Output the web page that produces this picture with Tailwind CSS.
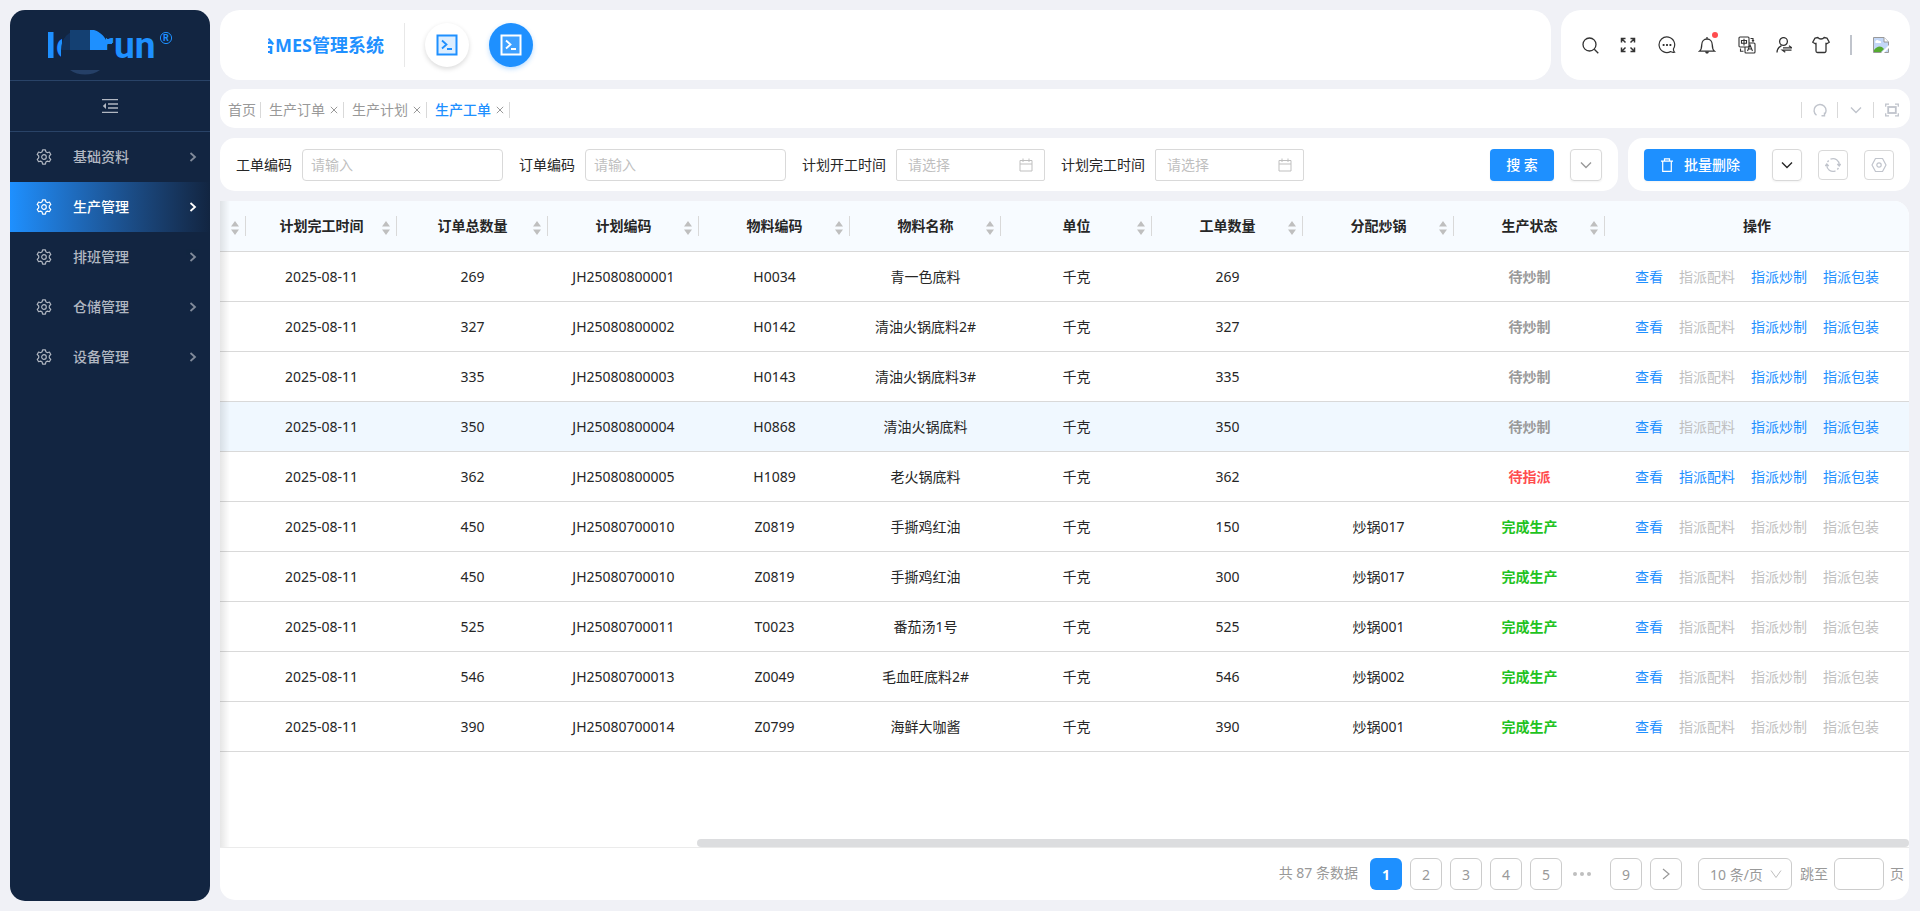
<!DOCTYPE html>
<html lang="zh-CN">
<head>
<meta charset="utf-8">
<title>MES管理系统 - 生产工单</title>
<script src="https://cdn.jsdelivr.net/npm/@tailwindcss/browser@4"></script>
</head>
<body class="bg-[#f0f1f6] font-['Noto_Sans','Noto_Sans_CJK_SC',sans-serif] text-sm leading-5 text-[#262626]">
<svg class="hidden" aria-hidden="true">
  <symbol id="gear" viewBox="0 0 16 16" fill="none" stroke="currentColor" stroke-width="1.2" stroke-linejoin="round">
    <path d="M6.6.8h2.8l.5 2 1.5.9 2-.7 1.4 2.5-1.5 1.4v1.9l1.5 1.5-1.4 2.4-2-.6-1.5.9-.5 2.1H6.600l-.5-2.100-1.500-.9-2 .6-1.400-2.400 1.500-1.500V6.900L1.200 5.500 2.600 3l2 .7 1.500-.9z"/><circle cx="8" cy="8" r="2.300"/>
  </symbol>
  <symbol id="right" viewBox="0 0 10 10" fill="none" stroke="currentColor" stroke-width="1.800"><path d="M2.500 1 7 5 2.500 9"/></symbol>
  <symbol id="down" viewBox="0 0 12 12" fill="none" stroke="currentColor" stroke-width="1.400"><path d="M1 3.500 6 8.500 11 3.500"/></symbol>
  <symbol id="close" viewBox="0 0 8 8" fill="none" stroke="currentColor" stroke-width="1"><path d="M.8.8 7.200 7.200M7.200.8.8 7.200"/></symbol>
  <symbol id="console" viewBox="0 0 22 22" fill="none" stroke="currentColor" stroke-width="2">
    <rect x="1.500" y="1.500" width="19" height="19" fill="currentColor" fill-opacity=".15"/><path d="m6 6.500 4.500 4L6 14.500M11 15h5" stroke-width="1.800"/>
  </symbol>
  <symbol id="sort" viewBox="0 0 8 14" fill="#bfbfbf"><path d="M4 0 8 5.500H0zM0 8.500h8L4 14z"/></symbol>
  <symbol id="calendar" viewBox="0 0 14 14" fill="none" stroke="currentColor"><path d="M1 2.500h12v10.500H1zM1 6h12M4 .5v3.500M10 .5v3.500"/></symbol>
</svg>

<div class="flex min-h-screen gap-2.5 p-2.5">
  <aside class="flex w-[200px] shrink-0 flex-col overflow-hidden rounded-[15px] bg-[#122541] text-[#b1b7c1]">
    <div class="h-[71px] border-b border-[#294367]">
      <svg class="block" width="200" height="70" viewBox="0 0 200 70" role="img" aria-label="logo">
        <g fill="#1e90ff" font-family="Roboto, sans-serif" font-weight="700" font-size="37">
          <text x="46" y="48">o</text><text x="90" y="48">r</text><text x="104" y="48">un</text>
          <rect x="38" y="22" width="5.500" height="26"/>
        </g>
        <path d="M52 20h46v7H96v21h4v12H52z" fill="#122541"/>
        <path d="M51 40c0-12 8-20 19-20h10v20z" fill="#12305a"/>
        <path d="M60 20h20v20H60z" fill="#144072"/>
        <path d="M80 20h4c6 2 10 6 12 10v-1h6v5h-5v6H80z" fill="#1e90ff"/>
        <path d="M51 40h53v20H51z" fill="#122541"/>
        <path d="M60 60h30c-8 6-22 6-30 0z" fill="#254067"/>
        <circle cx="156" cy="28" r="5.600" fill="none" stroke="#1e90ff"/>
        <text x="153" y="31" font-size="9" font-weight="700" font-family="Roboto, sans-serif" fill="#1e90ff">R</text>
      </svg>
    </div>
    <button aria-label="收起菜单" class="flex h-[51px] items-center justify-center border-b border-[#294367]">
      <svg class="size-4" viewBox="0 0 16 16" fill="none" stroke="currentColor" stroke-width="1.300"><path d="M0 1.700h16M6 6h10M6 10h10M0 14.300h16"/><path d="M4 5v6L.8 8z" fill="currentColor" stroke="none"/></svg>
    </button>
    <nav id="menu" class="font-medium"></nav>
  </aside>

  <main class="flex min-w-0 flex-1 flex-col pb-px">
    <header class="flex h-[70px] gap-2.5">
      <div class="flex flex-1 items-center rounded-[20px] bg-white pl-12">
        <h1 class="flex text-lg leading-7 font-bold text-[#1e90ff]"><span class="flex w-[7px] justify-end overflow-hidden">台</span>MES管理系统</h1>
        <span class="ml-5 h-11 w-px bg-[#e8e8e8]"></span>
        <button aria-label="控制台" class="ml-5 flex size-11 items-center justify-center rounded-full bg-white text-[#1e90ff] shadow-[0_2px_5px_rgba(0,0,0,0.15)]"><svg class="size-[22px]"><use href="#console"/></svg></button>
        <button aria-label="生产控制台" class="ml-5 flex size-11 items-center justify-center rounded-full bg-[#1e90ff] text-white shadow-[0_2px_5px_rgba(30,144,255,0.3)]"><svg class="size-[22px]"><use href="#console"/></svg></button>
      </div>
      <div class="flex w-[349px] items-center gap-[18px] rounded-[20px] bg-white pl-[19px] text-[#333]">
        <button aria-label="搜索" class="flex w-5 justify-center"><svg class="size-[17px]" viewBox="0 0 17 17" fill="none" stroke="currentColor" stroke-width="1.300"><circle cx="7.500" cy="7.500" r="6.500"/><path d="m12.300 12.300 4 4"/></svg></button>
        <button aria-label="全屏" class="flex w-5 justify-center"><svg class="size-4" viewBox="0 0 16 16" fill="none" stroke="currentColor" stroke-width="1.500"><path d="M1.500 5.500v-4h4M1.500 1.500l4 4M10.500 1.500h4v4M14.500 1.500l-4 4M1.500 10.500v4h4M1.500 14.500l4-4M10.500 14.500h4v-4M14.500 14.500l-4-4"/></svg></button>
        <button aria-label="消息" class="flex w-[22px] justify-center"><svg class="size-[18px]" viewBox="0 0 18 18" fill="none" stroke="currentColor" stroke-width="1.200"><path d="M15.500 12.800A7.800 7.800 0 1 0 12.500 15.600c1 .6 2.500.9 4 .5-.9-.9-1.200-2-1-3.300z"/><path d="M4.700 9h1.800M8.100 9h1.800M11.500 9h1.800" stroke-width="1.800"/></svg></button>
        <button aria-label="通知" class="relative flex w-[22px] justify-center"><svg class="size-[18px]" viewBox="0 0 18 18" fill="none" stroke="currentColor" stroke-width="1.300"><path d="M1.500 15.200h15c-2-1.500-2.200-3.300-2.200-6.200C14.300 5.500 12 3 9 3S3.700 5.500 3.700 9c0 2.900-.2 4.700-2.200 6.200zM9 3V1"/><path d="M6.800 15.500h4.400L10 17.500H8z" fill="currentColor" stroke="none"/></svg><span class="absolute -top-1 right-0 size-1.5 rounded-full bg-[#ff4d4f]"></span></button>
        <button aria-label="语言" class="flex w-[22px] justify-center"><svg class="size-[18px]" viewBox="0 0 18 18" fill="none" stroke="currentColor" stroke-width="1.100"><rect x="1" y="1" width="10" height="10" rx="1"/><path d="M3.500 4.500h5v2.800h-5zM6 2.800v6.600M11 7h5a1 1 0 0 1 1 1v8a1 1 0 0 1-1 1H8a1 1 0 0 1-1-1v-5M9.500 15l2.500-6 2.500 6M10.300 13h3.400M12.500 2.500H15v2.700M2.500 12.500v2.700H5.500M14 4.200l1 1.200 1-1.200"/></svg></button>
        <button aria-label="切换用户" class="flex w-4 justify-center"><svg class="size-4" viewBox="0 0 16 16" fill="none" stroke="currentColor" stroke-width="1.300"><circle cx="7.500" cy="4.500" r="3.900"/><path d="M1 15.500c0-3.500 2-5.500 4.500-6.800M7 10.800h8.800L13 8.800M15.500 13.200H6.500L9.300 15.200"/></svg></button>
        <button aria-label="主题" class="flex w-[22px] justify-center"><svg class="size-[18px]" viewBox="0 0 18 18" fill="none" stroke="currentColor" stroke-width="1.300" stroke-linejoin="round"><path d="M6 1.500c1 2 5 2 6 0l3 .6 2.300 4.200-2.600 1.500-.7-.6v7.800a1.500 1.500 0 0 1-1.500 1.500h-7A1.500 1.500 0 0 1 4 15V7.200l-.7.6L.7 6.300 3 2.100z"/></svg></button>
        <span class="h-5 w-0.5 bg-[#c0c4cc]"></span>
        <svg class="ml-[3px] size-4" viewBox="0 0 16 16" role="img" aria-label="头像"><path d="M.5.5h10.500l4.500 4.500v10.500H.5z" fill="#c3d7f7" stroke="#999"/><path d="M11 .5V5h4.500" fill="#fff" stroke="#999"/><path d="M2.500 6a2 2 0 0 1 3.500-2 1.500 1.500 0 0 1 2 2z" fill="#fff"/><path d="M1 15v-2c3-4 7-5 10-1l-3 3z" fill="#55ab30"/><path d="M8 16 16 8v3l-5 5z" fill="#fff"/></svg>
      </div>
    </header>

    <div class="mt-[9px] flex h-[39px] items-center justify-between rounded-[15px] bg-white pt-0.5 pl-2 text-[#999]">
      <nav class="flex items-center">
        <a href="#" class="pr-1">首页</a>
        <span class="h-4 w-px bg-[#d9d9d9]"></span><a href="#" class="pl-2">生产订单</a><button aria-label="关闭生产订单" class="px-[5px]"><svg class="size-2"><use href="#close"/></svg></button>
        <span class="h-4 w-px bg-[#d9d9d9]"></span><a href="#" class="pl-2">生产计划</a><button aria-label="关闭生产计划" class="px-[5px]"><svg class="size-2"><use href="#close"/></svg></button>
        <span class="h-4 w-px bg-[#d9d9d9]"></span><a href="#" class="pl-2 font-medium text-[#1e90ff]">生产工单</a><button aria-label="关闭生产工单" class="px-[5px]"><svg class="size-2"><use href="#close"/></svg></button>
        <span class="h-4 w-px bg-[#d9d9d9]"></span>
      </nav>
      <div class="flex items-center pr-px text-[#c0c4cc]">
        <span class="h-4 w-px bg-[#d9d9d9]"></span>
        <button aria-label="刷新" class="flex w-[35px] justify-center"><svg class="size-[14px]" viewBox="0 0 14 14" fill="none" stroke="currentColor" stroke-width="1.400"><path d="M3.500 12.300A6 6 0 1 1 11 12M11.500 9.500v3.300H8.500"/></svg></button>
        <span class="h-4 w-px bg-[#d9d9d9]"></span>
        <button aria-label="更多" class="flex w-[35px] justify-center"><svg class="size-3"><use href="#down"/></svg></button>
        <span class="h-4 w-px bg-[#d9d9d9]"></span>
        <button aria-label="最大化" class="flex w-[35px] justify-center"><svg class="size-[14px]" viewBox="0 0 14 14" fill="none" stroke="currentColor" stroke-width="1.300"><path d="M.7 3.700v-2.500H4M10 1.200h3.300v2.500M13.300 10.300v2.500H10M4 12.800H.7v-2.500"/><rect x="3.200" y="4" width="7.600" height="6" stroke-width="1.800"/></svg></button>
      </div>
    </div>

    <div class="mt-2.5 flex h-[53px] gap-2.5">
      <form class="flex flex-1 items-center rounded-[15px] bg-white px-4">
        <label for="f1">工单编码</label><input id="f1" placeholder="请输入" class="mr-4 ml-2.5 h-8 w-[201px] rounded border border-[#d9d9d9] px-2 placeholder:text-[#bfbfbf]">
        <label for="f2">订单编码</label><input id="f2" placeholder="请输入" class="mr-4 ml-2.5 h-8 w-[201px] rounded border border-[#d9d9d9] px-2 placeholder:text-[#bfbfbf]">
        <label for="f3">计划开工时间</label>
        <div class="mr-4 ml-2.5 flex h-8 w-[149px] items-center rounded-xs border border-[#d9d9d9] px-[11px] text-[#bfbfbf]"><input id="f3" placeholder="请选择" class="min-w-0 flex-1 placeholder:text-[#bfbfbf]"><svg class="size-[14px]"><use href="#calendar"/></svg></div>
        <label for="f4">计划完工时间</label>
        <div class="ml-2.5 flex h-8 w-[149px] items-center rounded-xs border border-[#d9d9d9] px-[11px] text-[#bfbfbf]"><input id="f4" placeholder="请选择" class="min-w-0 flex-1 placeholder:text-[#bfbfbf]"><svg class="size-[14px]"><use href="#calendar"/></svg></div>
        <button type="button" class="ml-auto h-8 w-16 rounded bg-[#1e90ff] font-medium text-white shadow-xs">搜 索</button>
        <button type="button" aria-label="展开" class="ml-4 flex size-8 items-center justify-center rounded border border-[#d9d9d9] text-[#999] shadow-xs"><svg class="size-3"><use href="#down"/></svg></button>
      </form>
      <div class="flex items-center gap-4 rounded-[15px] bg-white px-4">
        <button class="flex h-8 w-28 items-center justify-center gap-2.5 rounded bg-[#1e90ff] font-medium text-white shadow-xs"><svg class="size-3.5" viewBox="0 0 14 14" fill="none" stroke="currentColor" stroke-width="1.200"><path d="M1 3.200h12M4.500 3V.8h5V3M2.700 3.500v9.800h8.600V3.500"/></svg>批量删除</button>
        <button aria-label="更多操作" class="flex h-8 w-[30px] items-center justify-center rounded border border-[#d9d9d9] shadow-xs"><svg class="size-3"><use href="#down"/></svg></button>
        <button aria-label="刷新表格" class="flex size-[30px] items-center justify-center rounded border border-[#d9d9d9] text-[#c0c4cc]"><svg class="size-4" viewBox="0 0 16 16" fill="none" stroke="currentColor" stroke-width="1.300"><path d="M5.500 2.200A6.200 6.200 0 0 1 14.200 8.500M10.500 13.800A6.200 6.200 0 0 1 1.800 7.500M12.300 7l1.900 2 1.500-2M.3 9l1.500-2 1.900 2M2.500 5l1.200-1.500M13.500 11l-1.200 1.500"/></svg></button>
        <button aria-label="设置" class="flex size-[30px] items-center justify-center rounded border border-[#d9d9d9] text-[#c0c4cc]"><svg class="size-4" viewBox="0 0 16 16" fill="none" stroke="currentColor" stroke-width="1.200" stroke-linejoin="round"><path d="M4.500 1.500h7L15 8l-3.500 6.500h-7L1 8z"/><circle cx="8" cy="8" r="2.200"/></svg></button>
      </div>
    </div>

    <section class="mt-2.5 mr-px flex flex-1 flex-col overflow-hidden rounded-[15px] rounded-tl-none bg-white">
      <div class="relative flex flex-1 flex-col border-b border-[#ebebeb]">
        <table class="w-full table-fixed border-separate border-spacing-0 text-center">
          <colgroup><col class="w-[26px]"><col class="w-[151px]"><col class="w-[151px]"><col class="w-[151px]"><col class="w-[151px]"><col class="w-[151px]"><col class="w-[151px]"><col class="w-[151px]"><col class="w-[151px]"><col class="w-[151px]"><col></colgroup>
          <thead><tr id="head" class="bg-[#f7fbff]"></tr></thead>
          <tbody id="rows"></tbody>
        </table>
        <div class="pointer-events-none absolute inset-y-0 left-0 w-2.5 bg-linear-to-r from-black/10 to-transparent"></div>
        <div class="mt-auto flex justify-end"><div class="h-2 w-[1212px] rounded bg-[#dcdddf]"></div></div>
      </div>
      <footer class="flex h-[52px] items-center justify-end pr-[5px] text-[#999]">
        <span class="mr-3 pb-0.5">共 87 条数据</span>
        <div class="flex gap-2">
          <button class="size-8 rounded-md bg-[#1e90ff] pt-0.5 font-bold text-white">1</button>
          <button class="size-8 rounded-md border border-[#ccc] pt-0.5">2</button>
          <button class="size-8 rounded-md border border-[#ccc] pt-0.5">3</button>
          <button class="size-8 rounded-md border border-[#ccc] pt-0.5">4</button>
          <button class="size-8 rounded-md border border-[#ccc] pt-0.5">5</button>
          <button aria-label="向后5页" class="flex size-8 items-center justify-center gap-[3px] pr-2"><span class="size-1 rounded-full bg-[#bfbfbf]"></span><span class="size-1 rounded-full bg-[#bfbfbf]"></span><span class="size-1 rounded-full bg-[#bfbfbf]"></span></button>
          <button class="size-8 rounded-md border border-[#ccc] pt-0.5">9</button>
          <button aria-label="下一页" class="flex size-8 items-center justify-center rounded-md border border-[#ccc]"><svg class="size-3" viewBox="0 0 12 12" fill="none" stroke="currentColor" stroke-width="1.200"><path d="M3 1 9 6 3 11"/></svg></button>
        </div>
        <div class="relative ml-4 flex items-center"><select aria-label="每页条数" class="h-8 w-[94px] appearance-none rounded-md border border-[#ccc] pt-0.5 pl-[11px]"><option>10 条/页</option></select><svg class="pointer-events-none absolute right-2.5 size-3 text-[#bfbfbf]" viewBox="0 0 12 12" fill="none" stroke="currentColor"><path d="M1 2.500 6 9.500 11 2.500"/></svg></div>
        <label for="jump" class="ml-2">跳至</label><input id="jump" class="mx-1.5 h-8 w-[50px] rounded-md border border-[#ccc] px-2">页
      </footer>
    </section>
  </main>
</div>
<script>
document.getElementById('menu').innerHTML = ['基础资料', '生产管理', '排班管理', '仓储管理', '设备管理'].map((t, i) =>
  `<a href="#" class="${i === 1 ? 'flex h-[50px] items-center bg-linear-to-r from-[#1e90ff] to-[#122541] pr-3 pl-[26px] text-white' : 'flex h-[50px] items-center pr-3 pl-[26px]'}"><svg class="mr-[21px] size-4"><use href="#gear"/></svg>${t}<svg class="${i === 1 ? 'ml-auto size-2.5' : 'ml-auto size-2.5 opacity-70'}"><use href="#right"/></svg></a>`).join('');

const heads = ['', '计划完工时间', '订单总数量', '计划编码', '物料编码', '物料名称', '单位', '工单数量', '分配炒锅', '生产状态'];
document.getElementById('head').innerHTML = heads.map(t =>
  `<th scope="col" class="relative h-[51px] border-b border-[#d9d9d9] p-0 font-bold">${t}<svg class="absolute top-5 right-[7px] h-3.5 w-2"><use href="#sort"/></svg><span class="absolute top-[15px] right-0 h-5 w-px bg-[#d9d9d9]"></span></th>`).join('') +
  '<th scope="col" class="border-b border-[#d9d9d9] p-0 font-bold">操作</th>';

const data = [
  ['269', 'JH25080800001', 'H0034', '青一色底料', '269', '', '待炒制'],
  ['327', 'JH25080800002', 'H0142', '清油火锅底料2#', '327', '', '待炒制'],
  ['335', 'JH25080800003', 'H0143', '清油火锅底料3#', '335', '', '待炒制'],
  ['350', 'JH25080800004', 'H0868', '清油火锅底料', '350', '', '待炒制'],
  ['362', 'JH25080800005', 'H1089', '老火锅底料', '362', '', '待指派'],
  ['450', 'JH25080700010', 'Z0819', '手撕鸡红油', '150', '炒锅017', '完成生产'],
  ['450', 'JH25080700010', 'Z0819', '手撕鸡红油', '300', '炒锅017', '完成生产'],
  ['525', 'JH25080700011', 'T0023', '番茄汤1号', '525', '炒锅001', '完成生产'],
  ['546', 'JH25080700013', 'Z0049', '毛血旺底料2#', '546', '炒锅002', '完成生产'],
  ['390', 'JH25080700014', 'Z0799', '海鲜大咖酱', '390', '炒锅001', '完成生产'],
];
const statusClass = {'待炒制': 'text-[#999]', '待指派': 'text-[#ff4d4f]', '完成生产': 'text-[#1fc31f]'};
const enabled = {'待炒制': [1, 0, 1, 1], '待指派': [1, 1, 1, 1], '完成生产': [1, 0, 0, 0]};
document.getElementById('rows').innerHTML = data.map((r, i) => {
  const cells = ['', '2025-08-11', r[0], r[1], r[2], r[3], '千克', r[4], r[5]];
  const links = ['查看', '指派配料', '指派炒制', '指派包装'].map((t, k) =>
    enabled[r[6]][k] ? `<a href="#" class="text-[#1e90ff]">${t}</a>` : `<a href="#" aria-disabled="true" class="text-[#bfbfbf]">${t}</a>`).join('');
  return `<tr class="${i === 3 ? 'bg-[#f0f8ff]' : 'bg-white'}">` +
    cells.map(c => `<td class="h-[50px] border-b border-[#d9d9d9] p-0">${c}</td>`).join('') +
    `<td class="border-b border-[#d9d9d9] p-0"><b class="${statusClass[r[6]]}">${r[6]}</b></td>` +
    `<td class="border-b border-[#d9d9d9] p-0"><div class="flex justify-center gap-4">${links}</div></td></tr>`;
}).join('');
</script>
</body>
</html>
